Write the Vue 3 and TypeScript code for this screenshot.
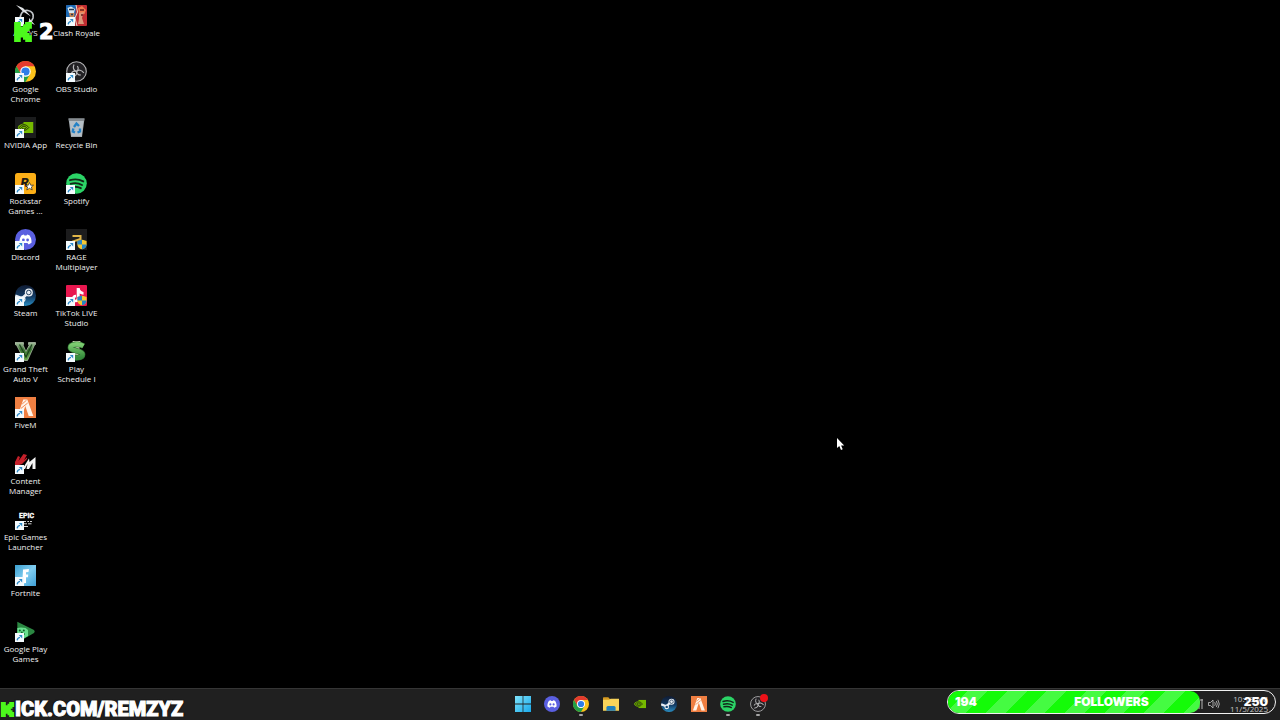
<script setup lang="ts">
interface Shortcut {
  id: string
  lines: string[]
  arrow?: boolean
}

interface Task {
  id: string
  name: string
  running?: boolean
}

const columns: Shortcut[][] = [
  [
    { id: 'ansys', lines: ['ANSYS'], arrow: true },
    { id: 'chrome', lines: ['Google', 'Chrome'], arrow: true },
    { id: 'nvidia', lines: ['NVIDIA App'], arrow: true },
    { id: 'rockstar', lines: ['Rockstar', 'Games ...'], arrow: true },
    { id: 'discord', lines: ['Discord'], arrow: true },
    { id: 'steam', lines: ['Steam'], arrow: true },
    { id: 'gta', lines: ['Grand Theft', 'Auto V'], arrow: true },
    { id: 'fivem', lines: ['FiveM'], arrow: true },
    { id: 'content', lines: ['Content', 'Manager'], arrow: true },
    { id: 'epic', lines: ['Epic Games', 'Launcher'], arrow: true },
    { id: 'fortnite', lines: ['Fortnite'], arrow: true },
    { id: 'play', lines: ['Google Play', 'Games'], arrow: true },
  ],
  [
    { id: 'clash', lines: ['Clash Royale'], arrow: true },
    { id: 'obs', lines: ['OBS Studio'], arrow: true },
    { id: 'recycle', lines: ['Recycle Bin'] },
    { id: 'spotify', lines: ['Spotify'], arrow: true },
    { id: 'rage', lines: ['RAGE', 'Multiplayer'], arrow: true },
    { id: 'tiktok', lines: ['TikTok LIVE', 'Studio'], arrow: true },
    { id: 'schedule', lines: ['Play', 'Schedule I'], arrow: true },
  ],
]

const tasks: Task[] = [
  { id: 'windows', name: 'Start' },
  { id: 'discord', name: 'Discord' },
  { id: 'chrome', name: 'Google Chrome', running: true },
  { id: 'folder', name: 'File Explorer' },
  { id: 'nvidia-eye', name: 'NVIDIA App' },
  { id: 'steam', name: 'Steam' },
  { id: 'fivem', name: 'FiveM' },
  { id: 'spotify', name: 'Spotify', running: true },
  { id: 'obs', name: 'OBS Studio', running: true },
]
</script>

<template>
  <div class="desktop">
    <svg class="defs" aria-hidden="true">
      <defs>
        <linearGradient id="g-steam" x1="0" y1="0" x2="0" y2="1">
          <stop offset="0" stop-color="#101c34" /><stop offset="0.55" stop-color="#123a63" /><stop offset="1" stop-color="#2b8fc4" />
        </linearGradient>
        <linearGradient id="g-fort" x1="0" y1="0" x2="1" y2="1">
          <stop offset="0" stop-color="#3b9fd0" /><stop offset="0.5" stop-color="#7fcdf0" /><stop offset="1" stop-color="#3f9fd6" />
        </linearGradient>
        <linearGradient id="g-win" x1="0" y1="0" x2="1" y2="1">
          <stop offset="0" stop-color="#7fe3fb" /><stop offset="1" stop-color="#19a9ea" />
        </linearGradient>
        <linearGradient id="g-v" x1="0" y1="0" x2="0" y2="1">
          <stop offset="0" stop-color="#a9c1a2" /><stop offset="0.4" stop-color="#37702f" /><stop offset="1" stop-color="#6fae4e" />
        </linearGradient>
        <linearGradient id="g-s" x1="0" y1="0" x2="0" y2="1">
          <stop offset="0" stop-color="#7ccb70" /><stop offset="1" stop-color="#338a3a" />
        </linearGradient>
      </defs>

      <symbol id="shortcut" viewBox="0 0 9 9">
        <rect width="9" height="9" fill="#f4fafd" />
        <path d="M2.2 7.4C2.300 5.400 3.400 4.500 5 4.300" fill="none" stroke="#2b8ac9" stroke-width="1.300" />
        <path d="M3.800 2h3.400v3.600z" fill="#2b8ac9" />
      </symbol>

      <symbol id="shield" viewBox="0 0 10 10">
        <path d="M5 0 9.600 1.600V5C9.600 7.600 7.500 9.300 5 10 2.500 9.300.4 7.600.4 5V1.600z" fill="#f5c932" />
        <path d="M5 0V5H.4V1.600zM5 5h4.600C9.500 7.600 7.500 9.300 5 10z" fill="#2684c5" />
      </symbol>

      <symbol id="ansys" viewBox="0 0 21 21">
        <path d="M5 16C5 8 8 5 13 5.500 17 6 19 9 18 13 17 16 14 18 10 18" fill="none" stroke="#bfc3c7" stroke-width="1.700" />
        <path d="M1 0 8 3 16 11.500 8 6.500zM14 13 20 20 14 17z" fill="#dfe2e5" />
      </symbol>

      <symbol id="chrome" viewBox="0 0 21 21">
        <circle cx="10.500" cy="10.500" r="10.500" fill="#fbc21b" />
        <path d="M1.400 5.250A10.500 10.500 0 0 1 19.600 5.250H10.500L6 13.100z" fill="#e33b2e" />
        <path d="M1.400 5.250A10.500 10.500 0 0 0 10.500 21L15.050 13.100 10.500 15.700 6 13.100z" fill="#23a047" />
        <circle cx="10.500" cy="10.500" r="5.300" fill="#fff" />
        <circle cx="10.500" cy="10.500" r="4.100" fill="#2f7de8" />
      </symbol>

      <symbol id="eye" viewBox="0 0 16 11">
        <path d="M6 0H16V11H6z" fill="#76b900" />
        <path d="M0 5.500C2 2.500 4 1.500 6.500 1.500 9.500 1.500 11.500 3.500 13 5.500 11 8.300 9 9.500 6.500 9.500 4 9.500 1.500 8 0 5.500z" fill="#76b900" />
        <path d="M1.800 5.500C3.500 3.200 5 2.700 6.500 2.700 8.500 2.700 10 4 11.300 5.500 9.700 7.500 8.300 8.300 6.500 8.300 4.300 8.300 3 7 1.800 5.500z" fill="none" stroke="#17200c" stroke-width="0.900" />
        <path d="M4 5.500C5.300 4.200 6 4.300 7 4.400 8 4.600 8.600 5.100 9 5.600 8 6.700 7.300 7 6.400 7 5.400 7 4.600 6.400 4 5.500z" fill="none" stroke="#17200c" stroke-width="0.900" />
      </symbol>
      <symbol id="nvidia" viewBox="0 0 21 21">
        <rect width="21" height="21" fill="#1b1c1d" />
        <use href="#eye" x="2.500" y="5" width="16" height="11" />
      </symbol>
      <symbol id="nvidia-eye" viewBox="0 0 21 21">
        <use href="#eye" x="2.500" y="5" width="16" height="11" />
      </symbol>

      <symbol id="rockstar" viewBox="0 0 21 21">
        <rect width="21" height="21" rx="2.500" fill="#fcaf17" />
        <text x="5.500" y="14" font-family="Roboto, sans-serif" font-size="13" font-weight="900" font-style="italic" fill="#1d1a14">R</text>
        <path d="M14.500 9.500 15.700 12.200 18.500 12.200 16.400 14 17.200 17 14.500 15.300 11.800 17 12.600 14 10.500 12.200 13.300 12.200z" fill="#fff" stroke="#222" stroke-width="0.700" />
      </symbol>

      <symbol id="discord" viewBox="0 0 21 21">
        <circle cx="10.500" cy="10.500" r="10.500" fill="#5a5fe0" />
        <path d="M6.600 6.300 8.900 5.600 9.500 6.500H11.500L12.100 5.600 14.400 6.300C16 8.500 16.800 11 16.500 13.700 15.500 14.600 14.300 15.200 13.300 15.300L12.500 14H8.500L7.700 15.300C6.700 15.200 5.500 14.600 4.500 13.700 4.200 11 5 8.500 6.600 6.300z" fill="#fff" />
        <circle cx="8.400" cy="11" r="1.400" fill="#5a5fe0" /><circle cx="12.600" cy="11" r="1.400" fill="#5a5fe0" />
      </symbol>

      <symbol id="steam" viewBox="0 0 21 21">
        <circle cx="10.500" cy="10.500" r="10.500" fill="url(#g-steam)" />
        <path d="M0.200 11 7 13.500 13.500 7.500" fill="none" stroke="#e9eef3" stroke-width="3" />
        <circle cx="7.500" cy="14.300" r="3" fill="#e9eef3" />
        <circle cx="7.500" cy="14.300" r="1.600" fill="#1a4b78" />
        <circle cx="13.800" cy="7.500" r="4" fill="#e9eef3" />
        <circle cx="13.800" cy="7.500" r="2.300" fill="none" stroke="#23405f" stroke-width="1" />
      </symbol>

      <symbol id="gta" viewBox="0 0 21 21">
        <path d="M0 1.500H8.500V3.500L8 4 11 10.500 14.300 4 13.500 3.500V1.500H20.500V3.500L19.500 4 12.500 19.500H9.500L1.500 4 0 3.500z" fill="url(#g-v)" stroke="#b9c8b3" stroke-width="0.700" />
        <path d="M4.500 3.500 11 16 16.900 3.500" fill="none" stroke="#1c421d" stroke-width="1.300" />
      </symbol>

      <symbol id="fivem" viewBox="0 0 21 21">
        <rect width="21" height="21" fill="#ef7f42" />
        <path d="M8.300 2.500H12.300L18.300 19H13.700L10.300 9 7 19H2.500z" fill="#fff4ea" />
        <path d="M7.200 7 11.500 3.200M5.800 11.500 12.700 6" stroke="#ef7f42" stroke-width="0.900" />
      </symbol>

      <symbol id="content" viewBox="0 0 21 21">
        <path d="M0 9 3 3 5 4 3.500 8 8.500 1 12 2 9 7 12 4.500 12 6 7 11 4 12 0 14z" fill="#c5202a" />
        <path d="M8 15 14 5.500 14.500 9 20.500 4 20.500 16H17.500V10L14 16H11.500L12.500 11 10 16H7z" fill="#f5f5f5" />
      </symbol>

      <symbol id="epic" viewBox="0 0 21 21">
        <text x="4" y="9" font-family="'Liberation Sans Narrow', Roboto, sans-serif" font-size="7" font-weight="700" fill="#fff" stroke="#fff" stroke-width="0.300">EPIC</text>
        <path d="M5 12.500H7.500M9 12.500H11M12.300 12.500H14M15 12.500H17M8 14.800H12M13 14.800H16.500M9 17.500H13" stroke="#cfcfcf" stroke-width="1" />
      </symbol>

      <symbol id="fortnite" viewBox="0 0 21 21">
        <rect width="21" height="21" fill="url(#g-fort)" />
        <path d="M8 4.500 14 4 13.500 7 11 7.200V9.500H13.200L13 12.300H11V18L7.300 18.500z" fill="#fff" />
      </symbol>

      <symbol id="play" viewBox="0 0 21 21">
        <path d="M2.300 0.700 19 9Q20.500 10.500 19 12L6 19.500 2.300 18z" fill="#2b8742" />
        <path d="M2.300 7 6 6.500 10.500 7 13 9 13 15 6 19H2.300z" fill="#68df8e" />
        <g fill="#145c2b"><circle cx="4.800" cy="9.500" r="1" /><circle cx="8.800" cy="9.500" r="1" /><circle cx="6.800" cy="11.400" r="1" /><circle cx="4.800" cy="13" r="1" /><circle cx="8.800" cy="13" r="1" /></g>
      </symbol>

      <symbol id="clash" viewBox="0 0 21 21">
        <rect width="21" height="21" rx="1" fill="#bf2d32" />
        <path d="M0 1Q0 0 1 0H10L9 21H0z" fill="#1d6ab5" />
        <path d="M1.500 3 5 1.500 9 4 8 8 3 8z" fill="#d9e8ef" />
        <path d="M3 8H8.500L8 13H4z" fill="#c18759" />
        <path d="M3 4.500H8M5 9.500H7" stroke="#25364f" stroke-width="1.300" />
        <path d="M12 3 16 1 20 5 18.500 9 13 8z" fill="#ef7b4c" />
        <path d="M13 8 18 7 16 13 18 19H12L13 14z" fill="#d99a7c" />
        <path d="M14 5H18M15 10H17" stroke="#641c1d" stroke-width="1.400" />
        <path d="M10 0 11.500 7 9 13 11 21" fill="none" stroke="#f1d8c5" stroke-width="1" />
      </symbol>

      <symbol id="obs" viewBox="0 0 21 21">
        <circle cx="10.500" cy="10.500" r="9.800" fill="#222124" stroke="#b2b2b4" stroke-width="1.100" />
        <g fill="none" stroke="#b9b9bb" stroke-width="1.200">
          <path d="M8 3.500C6.500 7 7.700 9.700 10.500 10.500 12.500 9 12.700 6.800 11.300 5" />
          <path d="M8 3.500C6.500 7 7.700 9.700 10.500 10.500 12.500 9 12.700 6.800 11.300 5" transform="rotate(120 10.500 10.500)" />
          <path d="M8 3.500C6.500 7 7.700 9.700 10.500 10.500 12.500 9 12.700 6.800 11.300 5" transform="rotate(240 10.500 10.500)" />
        </g>
      </symbol>

      <symbol id="recycle" viewBox="0 0 21 21">
        <path d="M2.500 1.500 18.500 1.500 16 20H5z" fill="#a0a7ac" />
        <path d="M3.500 3 17.500 3 15.500 19H5.500z" fill="#b5bec5" />
        <path d="M2.500 1.500H18.500L18 4H3z" fill="#858b90" />
        <path d="M8 10 10.500 6.500 13 9M14 11.500 14 14.500 11.500 15.500M9 15.500 6.800 14.500 7.300 11.500" fill="none" stroke="#2381c6" stroke-width="2.400" />
      </symbol>

      <symbol id="spotify" viewBox="0 0 21 21">
        <circle cx="10.500" cy="10.500" r="10.300" fill="#2bd366" />
        <path d="M4 7.200Q11 5 17.300 8.400M4.600 10.800Q11 9 16 12M5.200 14.200Q10.500 12.800 14.800 15.200" fill="none" stroke="#122718" stroke-width="1.900" stroke-linecap="round" />
      </symbol>

      <symbol id="rage" viewBox="0 0 21 21">
        <rect width="21" height="21" fill="#1c1c1d" />
        <path d="M6.500 7H14.500V10L7 12.500 7 15" fill="none" stroke="#e0b548" stroke-width="2" />
        <use href="#shield" x="11" y="10.500" width="10" height="10" />
      </symbol>

      <symbol id="tiktok" viewBox="0 0 21 21">
        <rect width="21" height="21" rx="1" fill="#e8174f" />
        <path d="M10.700 3H13.700C14 5.500 15.500 6.700 17.500 7V9.800C16 9.700 14.700 9.200 13.700 8.500V13.500C13.500 18.500 6 18.500 6 13.500 6 11 8 9.500 10 9.700V12.500C8 12.300 8.200 15 9.700 14.800 10.500 14.700 10.700 14 10.700 13z" fill="#fff" />
        <use href="#shield" x="11" y="10.500" width="10" height="10" />
      </symbol>

      <symbol id="schedule" viewBox="0 0 21 21">
        <path d="M6.500 0H14.500L13.500 5 13.500 16 15 19H6L8 16V5z" fill="#d8d8bd" />
        <path d="M17.500 5C13 2.500 4.500 3 4.500 6.500 4.500 10.500 16.500 9 16.500 13.500 16.500 17.500 8 17.500 3 15" fill="none" stroke="#2a6a2d" stroke-width="5.800" />
        <path d="M17.500 5C13 2.500 4.500 3 4.500 6.500 4.500 10.500 16.500 9 16.500 13.500 16.500 17.500 8 17.500 3 15" fill="none" stroke="url(#g-s)" stroke-width="4.600" />
      </symbol>

      <symbol id="windows" viewBox="0 0 21 21">
        <path d="M0 0H10V10H0zM11 0H21V10H11zM0 11H10V21H0zM11 11H21V21H11z" fill="url(#g-win)" />
      </symbol>

      <symbol id="folder" viewBox="0 0 21 21">
        <path d="M0 2.500Q0 1.500 1 1.500H7L9 4H20V8H0z" fill="#d59a21" />
        <path d="M0 5H8L10 3.500H21V19.500H0z" fill="#f7d35a" />
        <path d="M4.500 19.500V15Q4.500 13 6.500 13H14.500Q16.500 13 16.500 15V19.500z" fill="#1e7fbd" />
      </symbol>

      <symbol id="kick" viewBox="1 0 22 24">
        <path d="M1.333 0h8v5.333H12V2.667h2.667V0h8v8H20v2.667h-2.667v2.666H20V16h2.667v8h-8v-2.667H12v-2.666H9.333V24h-8Z" fill="#4cf81c" />
      </symbol>
    </svg>

    <main class="workspace">
      <div v-for="(column, index) in columns" :key="index" class="column">
        <button v-for="item in column" :key="item.id" type="button" class="shortcut">
          <span class="picture">
            <svg class="icon" aria-hidden="true"><use :href="'#' + item.id" /></svg>
            <svg v-if="item.arrow" class="arrow" aria-hidden="true"><use href="#shortcut" /></svg>
          </span>
          <span class="label"><span v-for="line in item.lines" :key="line" class="line">{{ line }}</span></span>
        </button>
      </div>
    </main>

    <footer class="taskbar">
      <nav class="tasks">
        <button v-for="task in tasks" :key="task.id" type="button" class="task" :class="{ running: task.running }" :aria-label="task.name">
          <svg class="task-icon" aria-hidden="true"><use :href="'#' + task.id" /></svg>
          <span v-if="task.id === 'obs'" class="live"></span>
        </button>
      </nav>
      <div class="tray">
        <svg class="tray-icon" viewBox="0 0 12 12" aria-hidden="true">
          <path d="M1 9V11M4 7V11M7 5V11M10 1V11M8 2H11" stroke="#b4b4b4" fill="none" />
        </svg>
        <svg class="tray-icon" viewBox="0 0 12 12" aria-hidden="true">
          <path d="M.5 4.500H2.500L5 2V10L2.500 7.500H.500zM6.700 4.200Q8 6 6.700 7.800M8.300 3Q10.400 6 8.300 9M9.900 1.800Q12.700 6 9.900 10.200" stroke="#b4b4b4" stroke-width="0.900" fill="none" />
        </svg>
        <time class="clock"><span>10:18 AM</span><span>11/5/2025</span></time>
      </div>
    </footer>

    <div class="counter">
      <svg class="counter-logo" aria-hidden="true"><use href="#kick" /></svg>
      <span>2</span>
    </div>

    <div class="channel">
      <svg class="channel-logo" role="img" aria-label="K"><use href="#kick" /></svg>
      <span>ICK.COM/REMZYZ</span>
    </div>

    <section class="goal">
      <div class="goal-fill"></div>
      <span class="goal-now">194</span>
      <span class="goal-title">FOLLOWERS</span>
      <span class="goal-target">250</span>
    </section>

    <svg class="cursor" viewBox="0 0 9 14" aria-hidden="true">
      <path d="M1 1V11L3.300 9 5 13 6.700 12.200 5.100 8.500H8.200z" fill="#fff" />
    </svg>
  </div>
</template>

<style>
html,
body {
  background: #000;
}
</style>

<style scoped>
.desktop {
  position: relative;
  display: flex;
  flex-direction: column;
  min-height: 100vh;
  overflow: hidden;
  background: #000;
  color: #f0f0f0;
  font-family: "Open Sans", "Noto Sans", sans-serif;
}

button {
  padding: 0;
  border: 0;
  background: none;
  color: inherit;
  font: inherit;
}

.defs {
  position: absolute;
  width: 0;
  height: 0;
}

.workspace {
  display: flex;
  flex: 1;
}

.column {
  display: grid;
  grid-template-columns: 51px;
  grid-auto-rows: 56px;
  align-content: start;
}

.shortcut {
  display: flex;
  flex-direction: column;
  align-items: center;
  gap: 2px;
  padding-top: 5px;
}

.picture {
  position: relative;
  width: 21px;
  height: 21px;
}

.icon {
  display: block;
  width: 21px;
  height: 21px;
}

.arrow {
  position: absolute;
  left: 0;
  bottom: 0;
  width: 9px;
  height: 9px;
}

.label {
  font-size: 8px;
  line-height: 10px;
  white-space: nowrap;
}

.line {
  display: block;
}

.taskbar {
  display: grid;
  grid-template-columns: 1fr 251px 1fr;
  align-items: center;
  box-sizing: border-box;
  height: 32px;
  padding-bottom: 1px;
  border-top: 1px solid #353535;
  background: #202020;
}

.tasks {
  grid-column: 2;
  display: flex;
  justify-content: space-between;
}

.task {
  position: relative;
  display: block;
  width: 16px;
  height: 16px;
}

.task-icon {
  display: block;
  width: 16px;
  height: 16px;
}

.running::after {
  content: "";
  position: absolute;
  left: 6px;
  bottom: -4px;
  width: 4px;
  height: 2px;
  border-radius: 1px;
  background: #a5a5a5;
}

.live {
  position: absolute;
  top: -2px;
  right: -2px;
  width: 8px;
  height: 8px;
  border-radius: 50%;
  background: #ee1118;
}

.tray {
  display: flex;
  justify-content: flex-end;
  align-items: center;
  gap: 4px;
  padding-right: 12px;
}

.tray-icon {
  width: 12px;
  height: 12px;
}

.clock {
  display: grid;
  margin-left: 6px;
  color: #c4c4c4;
  font-size: 8px;
  line-height: 10px;
  text-align: right;
}

.counter {
  position: absolute;
  top: 20px;
  left: 13px;
  display: flex;
  align-items: center;
  gap: 6px;
  color: #fff;
  font: 700 21px/24px "DejaVu Sans", sans-serif;
  -webkit-text-stroke: 1px #fff;
}

.counter-logo {
  width: 20px;
  height: 20px;
}

.channel {
  position: absolute;
  left: 0;
  bottom: 0;
  display: flex;
  align-items: center;
  color: #fff;
  font: 900 20px/21px "Roboto", sans-serif;
  -webkit-text-stroke: 1px #fff;
  text-shadow: 0 0 2px #000, 0 0 2px #000;
}

.channel-logo {
  width: 15px;
  height: 15px;
}

.goal {
  position: absolute;
  right: 4px;
  bottom: 6px;
  box-sizing: border-box;
  display: grid;
  grid-template-columns: 1fr auto 1fr;
  align-items: center;
  width: 329px;
  height: 24px;
  padding: 0 7px;
  border: 1px solid #f2f2f2;
  border-radius: 12px;
  overflow: hidden;
  color: #fff;
  font: 900 12px/16px "Inter", sans-serif;
}

.goal-fill {
  position: absolute;
  inset: 0 auto 0 0;
  width: 77%;
  border-radius: 0 10px 10px 0;
  background: repeating-linear-gradient(135deg, #14fb08 0 14px, #45fb42 14px 28px);
}

.goal-now,
.goal-title,
.goal-target {
  position: relative;
}

.goal-target {
  text-align: right;
}

.cursor {
  position: absolute;
  left: 836px;
  top: 437px;
  width: 9px;
  height: 14px;
}
</style>
